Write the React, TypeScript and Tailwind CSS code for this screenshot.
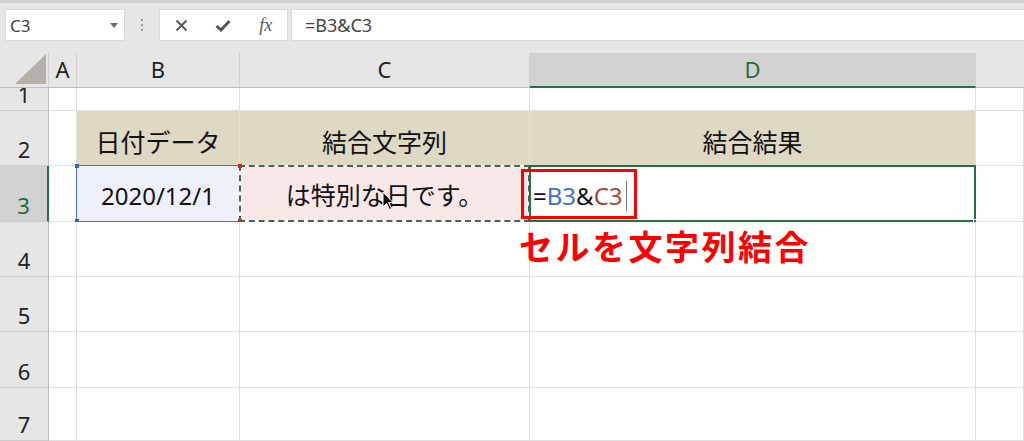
import React from "react";

const F = { fontFamily: '"Noto Sans", "Noto Sans CJK JP", sans-serif' };

function ColHead({ label, active, last }: { label: string; active?: boolean; last?: boolean }) {
  return (
    <div
      className={
        "flex items-center justify-center text-[22px] leading-none border-[#cfcfcf] " +
        (last ? "" : "border-r ") +
        (active
          ? "bg-[#d2d2d2] text-[#1d6b3f] border-b-2 border-b-[#217346]"
          : "bg-[#e6e6e6] text-[#222] border-b border-b-[#bdbdbd]")
      }
    >
      <span className="pb-[2px]">{label}</span>
    </div>
  );
}

function RowHead({ n, active }: { n: number; active?: boolean }) {
  return (
    <div
      className={
        "flex items-end justify-center text-[22px] leading-none pb-[5px] border-b border-b-[#cdcdcd] " +
        (active
          ? "bg-[#d2d2d2] text-[#1d6b3f] border-r-2 border-r-[#217346]"
          : "bg-[#e6e6e6] text-[#222] border-r border-r-[#bdbdbd]")
      }
    >
      {n}
    </div>
  );
}

function Cell({ cls = "", children }: { cls?: string; children?: React.ReactNode }) {
  return <div className={"relative bg-white border-r border-r-[#dfe0e8] border-b border-b-[#e1e1e1] " + cls}>{children}</div>;
}

export default function App() {
  return (
    <div className="w-[1024px] h-[441px] overflow-hidden bg-[#e6e6e6]" style={F}>
      <div className="h-[3px] bg-[#d3d3d3]" />
      {/* toolbar */}
      <div className="flex h-[30px] mt-[7px] pl-[6px]">
        <div className="w-[118px] bg-white flex items-center justify-between pl-[4px] pr-[6px] shadow-[0_0_0_1px_#dadada]">
          <span className="text-[17px] text-[#444] leading-none">C3</span>
          <span className="w-0 h-0 border-l-[4px] border-r-[4px] border-t-[5px] border-l-transparent border-r-transparent border-t-[#5d7262]" />
        </div>
        <div className="w-[36px] flex flex-col items-center justify-center gap-[3px]">
          <span className="w-[2px] h-[2px] bg-[#9a9a9a]" />
          <span className="w-[2px] h-[2px] bg-[#9a9a9a]" />
          <span className="w-[2px] h-[2px] bg-[#9a9a9a]" />
        </div>
        <div className="w-[127px] bg-white grid grid-cols-3 items-center shadow-[0_0_0_1px_#dadada]">
          <div className="flex justify-center">
            <svg width="13" height="13" viewBox="0 0 13 13">
              <path d="M1.5 1.5 L11.5 11.5 M11.5 1.5 L1.5 11.5" stroke="#555" strokeWidth="1.8" fill="none" />
            </svg>
          </div>
          <div className="flex justify-center">
            <svg width="16" height="13" viewBox="0 0 16 13">
              <path d="M1.5 7 L6 11 L14.5 2" stroke="#555" strokeWidth="3" fill="none" strokeLinejoin="miter" />
            </svg>
          </div>
          <div className="flex justify-center">
            <span className="text-[18px] italic text-[#555] leading-none" style={{ fontFamily: '"Liberation Serif", serif' }}>
              fx
            </span>
          </div>
        </div>
        <div className="ml-[5px] flex-1 bg-white flex items-center pl-[13px] shadow-[0_0_0_1px_#dadada]">
          <span className="text-[18px] text-[#444] leading-none">=B3&amp;C3</span>
        </div>
      </div>
      {/* sheet */}
      <div className="mt-[13px] grid grid-cols-[49px_28px_163px_290px_446px_48px] grid-rows-[35px_23px_55px_56px_55px_55px_56px_53px]">
        {/* header row */}
        <div className="relative bg-[#e6e6e6] border-r border-r-[#cfcfcf] border-b border-b-[#bdbdbd]">
          <svg className="absolute right-[2px] bottom-[3px]" width="31" height="30" viewBox="0 0 31 30">
            <path d="M31 0 L31 30 L0 30 Z" fill="#b4b1ab" />
          </svg>
        </div>
        <ColHead label="A" />
        <ColHead label="B" />
        <ColHead label="C" />
        <ColHead label="D" active />
        <ColHead label="" last />

        {/* row 1 */}
        <RowHead n={1} />
        <Cell />
        <Cell cls="border-b-[#7b7b7b]" />
        <Cell cls="border-b-[#7b7b7b]" />
        <Cell cls="border-b-[#7b7b7b]" />
        <Cell />

        {/* row 2 */}
        <RowHead n={2} />
        <Cell cls="border-r-[#7b7b7b]" />
        <Cell cls="!bg-[#ddd9c3] border-r-[#7b7b7b] border-b-[#7b7b7b] flex items-center justify-center">
          <span className="text-[25px] leading-none text-[#111] pt-[9px]">日付データ</span>
        </Cell>
        <Cell cls="!bg-[#ddd9c3] border-r-[#7b7b7b] border-b-[#7b7b7b] flex items-center justify-center">
          <span className="text-[25px] leading-none text-[#111] pt-[9px]">結合文字列</span>
        </Cell>
        <Cell cls="!bg-[#ddd9c3] border-r-[#7b7b7b] border-b-[#7b7b7b] flex items-center justify-center">
          <span className="text-[25px] leading-none text-[#111] pt-[9px]">結合結果</span>
        </Cell>
        <Cell />

        {/* row 3 */}
        <RowHead n={3} active />
        <Cell />
        <Cell cls="!bg-[#eef0fb] flex items-center justify-center">
          <div className="absolute -left-px -top-px -right-px -bottom-px border border-[#4a74c0]" />
          <span className="absolute -left-[2px] -top-[2px] w-[4px] h-[4px] bg-[#3c64ad]" />
          <span className="absolute -left-[2px] -bottom-[2px] w-[4px] h-[4px] bg-[#3c64ad]" />
          <span className="text-[24px] leading-none text-[#111] pt-[4px]">2020/12/1</span>
        </Cell>
        <Cell cls="!bg-[#f9e8e8] flex items-center justify-center">
          <div className="absolute -left-px -top-px -right-px -bottom-px border-2 border-white" />
          <div className="absolute -left-px -top-px -right-px -bottom-px border-2 border-dashed border-[#4d6450]" />
          <span className="absolute -left-[2px] -top-[2px] w-[4px] h-[4px] bg-[#e02020]" />
          <span className="absolute -left-[2px] -bottom-[2px] w-[4px] h-[4px] bg-[#e02020]" />
          <span className="text-[25px] leading-none text-[#111] pt-[4px]">は特別な日です。</span>
          <svg className="absolute left-[142px] top-[25px]" width="13" height="20" viewBox="0 0 13 20">
            <path d="M1 1 L1 16 L4.5 12.5 L7.5 18.5 L9.5 17.5 L6.5 11.5 L11 11.5 Z" fill="#000" stroke="#fff" strokeWidth="1" />
          </svg>
        </Cell>
        <Cell cls="flex items-center">
          <div className="absolute -left-px -top-px -right-px -bottom-px border-2 border-[#217346]" />
          <span className="absolute -right-[3px] -bottom-[3px] w-[5px] h-[5px] bg-[#217346] border border-white" />
          <div className="absolute left-[-9px] top-[3px] w-[116px] h-[50px] border-[3px] border-[#ff0000]" />
          <span className="pl-[3px] pt-[4px] text-[24px] leading-none flex items-center">
            <span className="text-[#111]">=</span>
            <span className="text-[#4472c4]">B3</span>
            <span className="text-[#111]">&amp;</span>
            <span className="text-[#a8483b]">C3</span>
            <span className="ml-[3px] w-px h-[30px] bg-[#777]" />
          </span>
        </Cell>
        <Cell />

        {/* row 4 */}
        <RowHead n={4} />
        <Cell />
        <Cell />
        <Cell />
        <Cell>
          <span className="absolute left-[-11px] top-[8px] whitespace-nowrap text-[34px] font-bold leading-none tracking-[2.5px] text-[#ff0000]">
            セルを文字列結合
          </span>
        </Cell>
        <Cell />

        {/* rows 5-7 */}
        {[5, 6, 7].map((n) => (
          <React.Fragment key={n}>
            <RowHead n={n} />
            <Cell />
            <Cell />
            <Cell />
            <Cell />
            <Cell />
          </React.Fragment>
        ))}
      </div>
    </div>
  );
}
